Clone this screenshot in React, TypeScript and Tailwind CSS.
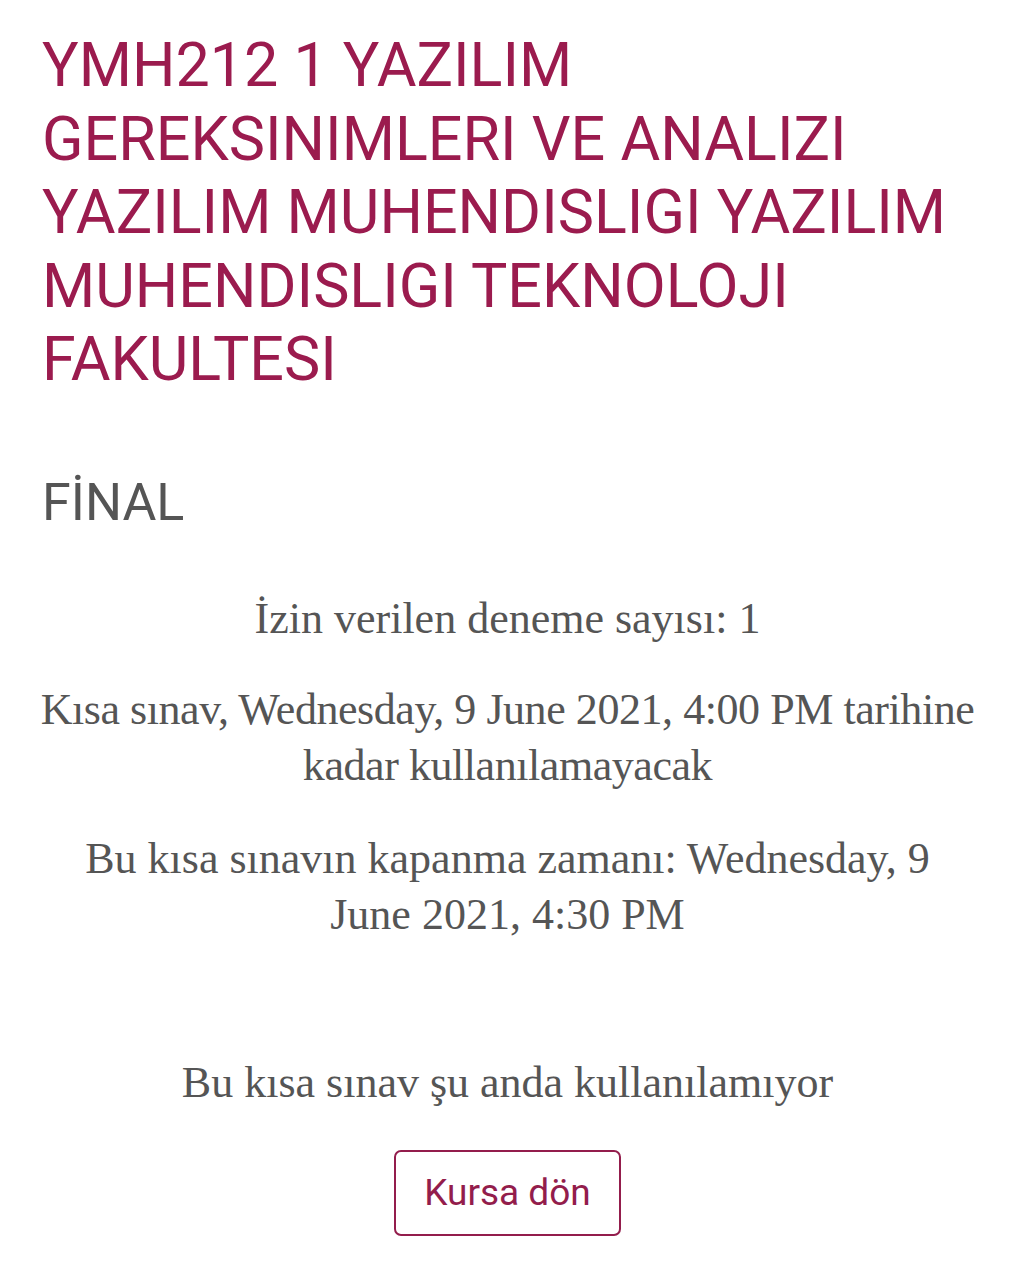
import React from 'react'

const sans = "font-['Roboto',_'Noto_Sans',_sans-serif]"
const serif = "font-['Liberation_Serif',_'DejaVu_Serif',_serif]"

const details = [
  { text: 'İzin verilen deneme sayısı: 1', cls: 'mt-[60px]' },
  { text: 'Kısa sınav, Wednesday, 9 June 2021, 4:00 PM tarihine kadar kullanılamayacak', cls: 'mt-[35px] -mx-[30px] tracking-[-0.01em]' },
  { text: 'Bu kısa sınavın kapanma zamanı: Wednesday, 9 June 2021, 4:30 PM', cls: 'mt-[37px]' },
]

export default function App() {
  return (
    <div className="min-h-[1280px] w-[1015px] bg-white px-[42px] pt-[29px]">
      {/* course title */}
      <h1 className={`${sans} text-[61px] leading-[73.5px] text-[#9b1b4e]`}>
        YMH212 1 YAZILIM GEREKSINIMLERI VE ANALIZI YAZILIM MUHENDISLIGI YAZILIM MUHENDISLIGI TEKNOLOJI FAKULTESI
      </h1>

      <h2 className={`${sans} mt-[78px] text-[52px] leading-[56px] text-[#555555]`}>FİNAL</h2>

      <div className={`${serif} text-center text-[#555555] text-[44px] leading-[56px]`}>
        {details.map((d, i) => (
          <p key={i} className={d.cls}>
            {d.text}
          </p>
        ))}

        <p className="mt-[112px]">Bu kısa sınav şu anda kullanılamıyor</p>
      </div>

      <div className="mt-[39px] flex justify-center">
        <button
          className={`${sans} h-[86px] w-[227px] rounded-[7px] border-[2.5px] border-[#931d4c] text-[37px] text-[#931d4c] bg-white`}
        >
          Kursa dön
        </button>
      </div>
    </div>
  )
}
